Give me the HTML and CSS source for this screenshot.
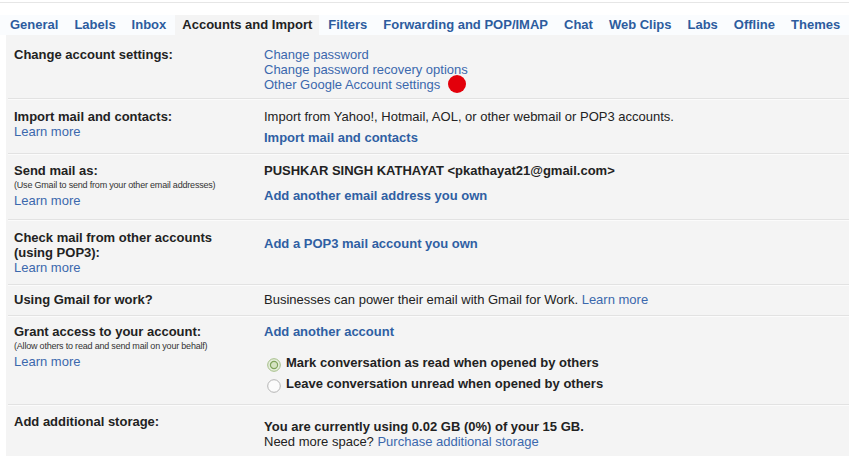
FILE: index.html
```html
<!DOCTYPE html>
<html lang="en">
<head>
    <meta charset="UTF-8">
    <meta name="viewport" content="width=device-width, initial-scale=1.0">
    <title>Settings - Accounts and Import</title>
    <link rel="stylesheet" href="styles.css">
</head>
<body>
    <div class="topline"></div>

    <nav class="tabs">
        <a class="tab">General</a>
        <a class="tab">Labels</a>
        <a class="tab">Inbox</a>
        <a class="tab active">Accounts and Import</a>
        <a class="tab">Filters</a>
        <a class="tab">Forwarding and POP/IMAP</a>
        <a class="tab">Chat</a>
        <a class="tab">Web Clips</a>
        <a class="tab">Labs</a>
        <a class="tab">Offline</a>
        <a class="tab">Themes</a>
    </nav>

    <div class="panel">
        <div class="row row-first">
            <div class="label">
                <b>Change account settings:</b>
            </div>
            <div class="value">
                <a class="link">Change password</a>
                <a class="link">Change password recovery options</a>
                <a class="link marked">Other Google Account settings<span class="dot"></span></a>
            </div>
        </div>

        <div class="row row-import">
            <div class="label">
                <b>Import mail and contacts:</b>
                <a class="link">Learn more</a>
            </div>
            <div class="value">
                <p>Import from Yahoo!, Hotmail, AOL, or other webmail or POP3 accounts.</p>
                <a class="action gap-6">Import mail and contacts</a>
            </div>
        </div>

        <div class="row row-send">
            <div class="label">
                <b>Send mail as:</b>
                <small>(Use Gmail to send from your other email addresses)</small>
                <a class="link">Learn more</a>
            </div>
            <div class="value">
                <b>PUSHKAR SINGH KATHAYAT &lt;pkathayat21@gmail.com&gt;</b>
                <a class="action gap-10">Add another email address you own</a>
            </div>
        </div>

        <div class="row row-pop">
            <div class="label">
                <b>Check mail from other accounts<br>(using POP3):</b>
                <a class="link">Learn more</a>
            </div>
            <div class="value">
                <a class="action gap-6">Add a POP3 mail account you own</a>
            </div>
        </div>

        <div class="row row-work">
            <div class="label">
                <b>Using Gmail for work?</b>
            </div>
            <div class="value">
                <p>Businesses can power their email with Gmail for Work. <a class="link inline">Learn more</a></p>
            </div>
        </div>

        <div class="row row-grant">
            <div class="label">
                <b>Grant access to your account:</b>
                <small>(Allow others to read and send mail on your behalf)</small>
                <a class="link">Learn more</a>
            </div>
            <div class="value">
                <a class="action">Add another account</a>
                <label class="radio first">
                    <svg width="14" height="14" viewBox="0 0 14 14">
                        <circle cx="7" cy="7" r="6.3" fill="#e6eedc" stroke="#a3bd86"/>
                        <circle cx="7" cy="7" r="3.6" fill="#d5e3c2" stroke="#7fa35b" stroke-width="1.2"/>
                    </svg>
                    <b>Mark conversation as read when opened by others</b>
                </label>
                <label class="radio">
                    <svg width="14" height="14" viewBox="0 0 14 14">
                        <circle cx="7" cy="7" r="6.3" fill="#fbfbfb" stroke="#b4b4b4"/>
                    </svg>
                    <b>Leave conversation unread when opened by others</b>
                </label>
            </div>
        </div>

        <div class="row row-storage">
            <div class="label">
                <b>Add additional storage:</b>
            </div>
            <div class="value gap-5">
                <b>You are currently using 0.02 GB (0%) of your 15 GB.</b>
                <p>Need more space? <a class="link inline">Purchase additional storage</a></p>
            </div>
        </div>
    </div>
</body>
</html>
```

FILE: styles.css
```css
* {
    margin: 0;
    padding: 0;
    box-sizing: border-box;
}

body {
    font-family: "Liberation Sans", Arial, sans-serif;
    font-size: 13px;
    line-height: 15px;
    color: #222;
    background: #fff;
    height: 456px;
    overflow: hidden;
}

.topline {
    margin-top: 2px;
    height: 1px;
    background: #e6e6e6;
    margin-bottom: 12px;
}

/* tab strip */
.tabs {
    display: flex;
    padding-left: 2px;
    background: #fafcfe;
}

.tab {
    padding: 0 8px;
    line-height: 20px;
    font-weight: bold;
    color: #2d5c9e;
    white-space: nowrap;
}

.tab.active {
    color: #222;
    background: #f4f4f4;
    padding: 0 7px;
    margin: 0 1px;
}

/* settings panel */
.panel {
    margin-left: 6px;
    padding-left: 2px;
    background: #f4f4f4;
    height: 422px;
}

.row {
    display: grid;
    grid-template-columns: 250px 1fr;
    padding: 9px 0 9px 6px;
    border-top: 1px solid #e2e2e2;
    box-shadow: inset 0 1px 0 #fbfbfb;
}

.row-first {
    border-top: none;
    box-shadow: none;
    padding: 12px 0 6px 6px;
}

.row-import { padding-top: 10px; padding-bottom: 8px; }
.row-send { padding-top: 9px; padding-bottom: 11px; }
.row-pop { padding-top: 10px; padding-bottom: 9px; }
.row-work { padding-top: 7px; padding-bottom: 8px; }
.row-grant { padding-top: 8px; padding-bottom: 13px; }
.row-storage { padding-top: 9px; }

.label,
.value {
    display: flex;
    flex-direction: column;
    align-items: flex-start;
}

.label small {
    font-size: 9px;
    letter-spacing: -0.2px;
    color: #333;
    line-height: 15px;
}

.link {
    color: #3b68ad;
    white-space: nowrap;
}

.link.inline {
    display: inline;
}

.action {
    font-weight: bold;
    color: #2f5fa3;
}

.gap-5 { margin-top: 5px; }
.gap-6 { margin-top: 6px; }
.gap-10 { margin-top: 10px; }

/* red marker next to the account settings link */
.marked {
    position: relative;
}

.dot {
    position: absolute;
    left: calc(100% + 8px);
    top: -2px;
    width: 18px;
    height: 18px;
    border-radius: 50%;
    background: #e3000b;
}

/* radio options */
.radio {
    display: flex;
    align-items: center;
    gap: 5px;
    margin-top: 6px;
    padding-left: 3px;
}

.radio.first {
    margin-top: 16px;
}

.radio svg {
    flex: none;
    margin: 2px 0 -2px;
}
```
